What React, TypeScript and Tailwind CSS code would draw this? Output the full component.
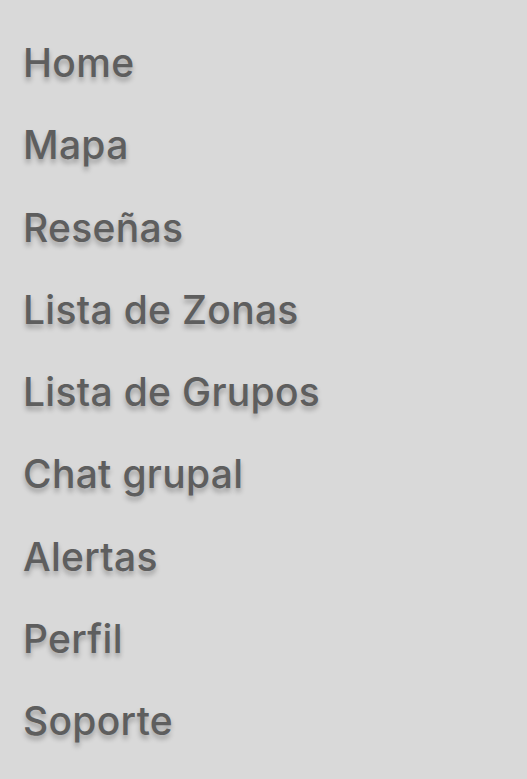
import React from 'react';

const items = [
  'Home',
  'Mapa',
  'Reseñas',
  'Lista de Zonas',
  'Lista de Grupos',
  'Chat grupal',
  'Alertas',
  'Perfil',
  'Soporte',
];

const App: React.FC = () => {
  return (
    <div className="min-h-screen w-full bg-[#d9d9d9] font-['Inter',sans-serif]">
      <nav className="flex flex-col gap-[28.3px] pt-[36px] pl-[23px]">
        {items.map((item) => (
          <a
            key={item}
            href="#"
            className="text-[39px] leading-[54px] font-medium tracking-[0.3px] text-[#5e5e5e] [text-shadow:0_4px_5px_rgba(0,0,0,0.28)]"
          >
            {item}
          </a>
        ))}
      </nav>
    </div>
  );
};

export default App;
